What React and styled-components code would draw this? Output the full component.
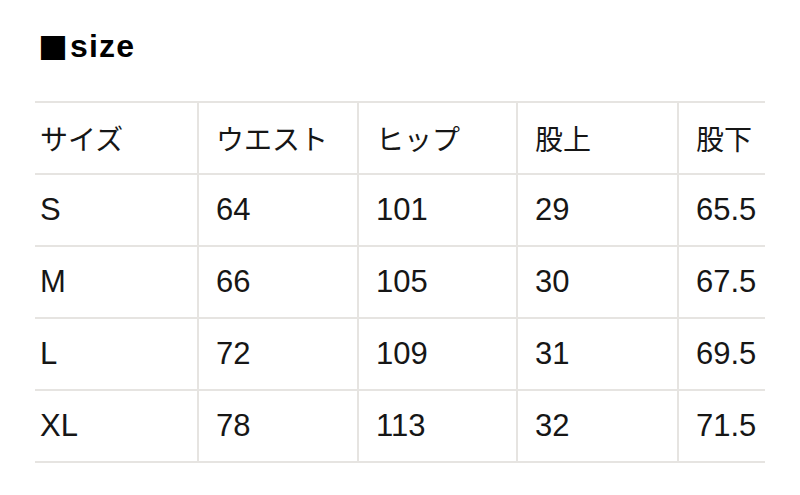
import React from 'react'
import styled, { createGlobalStyle } from 'styled-components'

const GlobalStyle = createGlobalStyle`
  html, body {
    margin: 0;
    padding: 0;
    background: #ffffff;
  }
  body {
    font-family: "Liberation Sans", "Noto Sans CJK JP", sans-serif;
    color: #111111;
  }
`

const Page = styled.div`
  padding: 28px 35px 0 35px;
  width: 730px;
`

const Title = styled.h2`
  margin: 0 0 0 3px;
  height: 73px;
  display: flex;
  align-items: flex-start;
  font-size: 32px;
  font-weight: 700;
  line-height: 36px;
  letter-spacing: 1.2px;
  color: #000000;
  .mark {
    font-family: "Noto Sans CJK JP", sans-serif;
    font-size: 30px;
    letter-spacing: 0;
    margin-right: 2px;
  }
`

const Table = styled.table`
  width: 730px;
  table-layout: fixed;
  border-collapse: collapse;
  border-top: 2px solid #e6e4e1;
`

const Cell = styled.td`
  height: 70px;
  padding: 0 0 0 ${p => (p.$first ? '5px' : '17px')};
  border-bottom: 2px solid #e6e4e1;
  border-left: ${p => (p.$first ? 'none' : '2px solid #e6e4e1')};
  font-size: ${p => (p.$head ? '28px' : '31px')};
  font-weight: 400;
  color: #161616;
  white-space: nowrap;
  vertical-align: middle;
  text-align: left;
`

const widths = [163, 160, 159, 161, 87]

const header = ['サイズ', 'ウエスト', 'ヒップ', '股上', '股下']
const rows = [
  ['S', '64', '101', '29', '65.5'],
  ['M', '66', '105', '30', '67.5'],
  ['L', '72', '109', '31', '69.5'],
  ['XL', '78', '113', '32', '71.5'],
]

export default function App() {
  return (
    <>
      <GlobalStyle />
      <Page>
        <Title><span className="mark">■</span>size</Title>
        <Table>
          <colgroup>
            {widths.map((w, i) => <col key={i} style={{ width: w }} />)}
          </colgroup>
          <tbody>
            <tr>
              {header.map((h, i) => <Cell key={i} $head $first={i === 0}>{h}</Cell>)}
            </tr>
            {rows.map((r, ri) => (
              <tr key={ri}>
                {r.map((v, i) => <Cell key={i} $first={i === 0}>{v}</Cell>)}
              </tr>
            ))}
          </tbody>
        </Table>
      </Page>
    </>
  )
}
